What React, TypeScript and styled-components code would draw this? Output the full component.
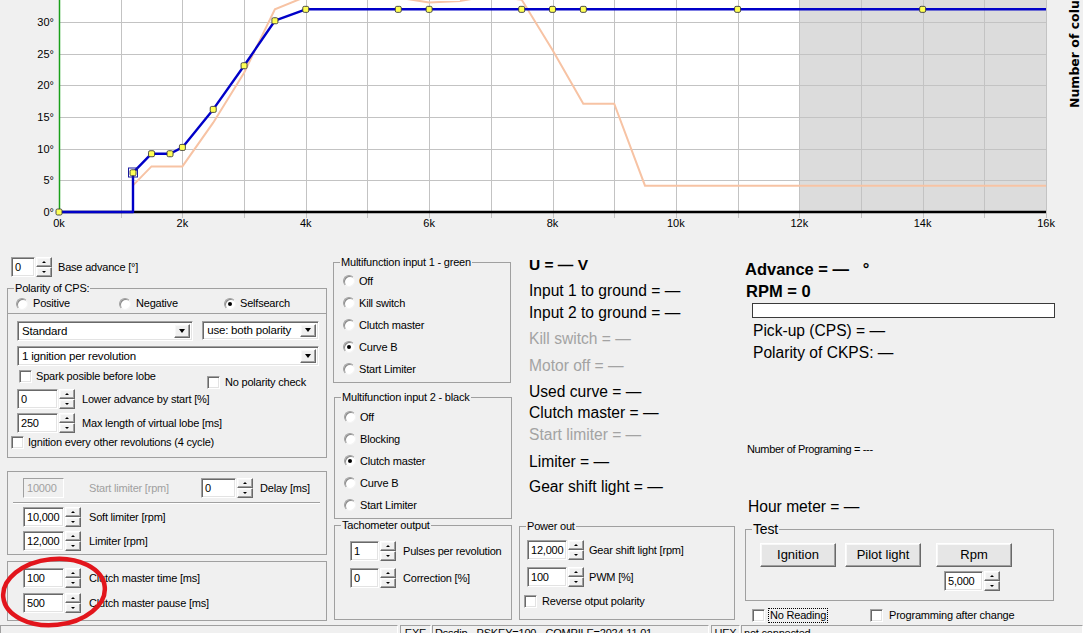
import React from 'react';
import styled, { createGlobalStyle, css } from 'styled-components';

const GlobalStyle = createGlobalStyle`
  html, body {
    margin: 0;
    padding: 0;
    background: #f0f0f0;
    overflow: hidden;
  }
  body {
    font-family: 'Liberation Sans', Arial, sans-serif;
    font-size: 11px;
    line-height: 13px;
    letter-spacing: -0.2px;
    color: #000;
  }
`;

const sunken = css`
  border: 1px solid;
  border-color: #a0a0a0 #ffffff #ffffff #a0a0a0;
  box-shadow: inset 1px 1px 0 #696969, inset -1px -1px 0 #e3e3e3;
`;

const raised = css`
  border: 1px solid;
  border-color: #ffffff #696969 #696969 #ffffff;
  box-shadow: inset -1px -1px 0 #a0a0a0, inset 1px 1px 0 #f8f8f8;
`;

const Window = styled.div`
  position: relative;
  width: 1083px;
  height: 633px;
  overflow: hidden;
  background: #f0f0f0;
`;

/* ---------- chart ---------- */

const ChartSvg = styled.svg`
  display: block;
  font-family: 'Liberation Sans', Arial, sans-serif;
  letter-spacing: 0;
`;

const X0 = 59;
const X1 = 1046;
const Y0 = 212;
const px = (rpm: number) => X0 + (rpm * (X1 - X0)) / 16000;
const py = (deg: number) => Y0 - deg * 6.333;
const crisp = (v: number) => Math.round(v) + 0.5;

const CURVE: [number, number][] = [
  [0, 0], [1200, 0], [1200, 6.2], [1500, 9.2], [1800, 9.2], [2000, 10.2],
  [2500, 16.2], [3000, 23.1], [3500, 30.2], [4000, 32], [5500, 32], [6000, 32],
  [7500, 32], [8000, 32], [8500, 32], [11000, 32], [14000, 32], [16000, 32],
];

const LIMIT: [number, number][] = [
  [1200, 4.2], [1500, 7.2], [2000, 7.2], [2500, 14.1], [3000, 22], [3500, 32],
  [4000, 34], [5000, 34.6], [6000, 33.1], [6500, 33.3], [7000, 34.2], [7500, 33.5],
  [8000, 25.6], [8500, 17.1], [9000, 17.1], [9500, 4.15], [16000, 4.15],
];

const toPoints = (pts: [number, number][]) =>
  pts.map(([r, d]) => `${px(r).toFixed(1)},${py(d).toFixed(1)}`).join(' ');

const Chart = () => {
  const ks = Array.from({ length: 17 }, (_, i) => i);
  const degs = [5, 10, 15, 20, 25, 30, 35];
  const markers = CURVE.filter((_, i) => i !== 1 && i !== CURVE.length - 1);
  return (
    <ChartSvg width={1083} height={232} viewBox="0 0 1083 232">
      <rect x={60} y={0} width={X1 - 60} height={Y0} fill="#ffffff" />
      <rect x={Math.round(px(12000))} y={0} width={X1 - Math.round(px(12000))} height={Y0} fill="#dcdcdc" />
      {degs.map((d) => (
        <line key={d} x1={60} x2={X1} y1={crisp(py(d))} y2={crisp(py(d))} stroke="#c3c3c3" />
      ))}
      {ks.slice(1).map((k) => (
        <line key={k} x1={crisp(px(k * 1000))} x2={crisp(px(k * 1000))} y1={0} y2={218} stroke="#c3c3c3" />
      ))}
      <polyline points={toPoints(LIMIT)} fill="none" stroke="#f7c3a4" strokeWidth={2} />
      <line x1={59.5} x2={59.5} y1={0} y2={Y0} stroke="#19a019" strokeWidth={1.5} />
      <line x1={X0} x2={X1} y1={212} y2={212} stroke="#000" strokeWidth={2.4} />
      <polyline
        points={toPoints(CURVE)}
        fill="none"
        stroke="#0000c8"
        strokeWidth={2.4}
        strokeLinejoin="round"
      />
      <rect x={128.5} y={168} width={9} height={9} fill="none" stroke="#1a1aa0" strokeWidth={1} />
      {markers.map(([r, d], i) => (
        <rect
          key={i}
          x={px(r) - 3}
          y={py(d) - 3}
          width={6}
          height={6}
          rx={1.5}
          fill="#ffff55"
          stroke="#3c3c3c"
          strokeWidth={0.9}
        />
      ))}
      {[0, 5, 10, 15, 20, 25, 30].map((d) => (
        <text key={d} x={54} y={py(d) + 4} fontSize={11} textAnchor="end">
          {d}°
        </text>
      ))}
      {ks.filter((k) => k % 2 === 0).map((k) => (
        <text key={k} x={px(k * 1000)} y={227} fontSize={11} textAnchor="middle">
          {k}k
        </text>
      ))}
      <text
        transform="translate(1079,108) rotate(-90)"
        fontFamily="'DejaVu Sans', Verdana, sans-serif"
        fontWeight={700}
        fontSize={12.5}
      >
        Number of columns
      </text>
    </ChartSvg>
  );
};

/* ---------- dialog controls ---------- */

const Panel = styled.div`
  display: flex;
  align-items: flex-start;
  height: 393px;
`;

const Column = styled.div<{ $w: number; $ml: number }>`
  display: flex;
  flex-direction: column;
  width: ${(p) => p.$w}px;
  margin-left: ${(p) => p.$ml}px;
  flex-shrink: 0;
`;

const Row = styled.div<{ $mt?: number; $ml?: number }>`
  display: flex;
  align-items: center;
  margin-top: ${(p) => p.$mt ?? 0}px;
  margin-left: ${(p) => p.$ml ?? 0}px;
`;

const Edit = styled.div<{ $w: number; $disabled?: boolean }>`
  box-sizing: border-box;
  width: ${(p) => p.$w}px;
  height: 20px;
  padding: 0 3px;
  line-height: 18px;
  white-space: nowrap;
  overflow: hidden;
  background: ${(p) => (p.$disabled ? '#f0f0f0' : '#ffffff')};
  color: ${(p) => (p.$disabled ? '#a0a0a0' : '#000')};
  ${sunken}
  ${(p) => p.$disabled && 'box-shadow: inset -1px -1px 0 #f0f0f0;'}
`;

const Spinner = styled.div`
  display: flex;
  flex-direction: column;
  width: 16px;
  height: 20px;
  margin-left: 1px;
`;

const SpinBtn = styled.span<{ $down?: boolean }>`
  flex: 1;
  box-sizing: border-box;
  display: flex;
  align-items: center;
  justify-content: center;
  background: #f0f0f0;
  ${raised}
  &::after {
    content: '';
    border-left: 2px solid transparent;
    border-right: 2px solid transparent;
    ${(p) => (p.$down ? 'border-top: 2px solid #000;' : 'border-bottom: 2px solid #000;')}
  }
`;

const Label = styled.span<{ $ml?: number; $w?: number; $dim?: boolean }>`
  margin-left: ${(p) => p.$ml ?? 0}px;
  ${(p) => p.$w && `width: ${p.$w}px; flex-shrink: 0;`}
  color: ${(p) => (p.$dim ? '#a0a0a0' : '#000')};
  white-space: nowrap;
`;

type FieldProps = {
  value: string;
  w: number;
  label: string;
  gap: number;
  mt?: number;
  ml?: number;
};

const Field = ({ value, w, label, gap, mt, ml }: FieldProps) => (
  <Row $mt={mt} $ml={ml}>
    <Edit $w={w}>{value}</Edit>
    <Spinner>
      <SpinBtn />
      <SpinBtn $down />
    </Spinner>
    <Label $ml={gap}>{label}</Label>
  </Row>
);

const Combo = styled.div<{ $w: number; $h: number; $mt?: number; $ml?: number }>`
  box-sizing: border-box;
  display: flex;
  width: ${(p) => p.$w}px;
  height: ${(p) => p.$h}px;
  margin-top: ${(p) => p.$mt ?? 0}px;
  margin-left: ${(p) => p.$ml ?? 0}px;
  padding: 2px;
  background: #ffffff;
  ${sunken}
`;

const ComboText = styled.span<{ $h: number }>`
  flex: 1;
  padding-left: 2px;
  line-height: ${(p) => p.$h - 6}px;
  font-size: 11.5px;
  white-space: nowrap;
`;

const DropBtn = styled.span`
  box-sizing: border-box;
  width: 16px;
  display: flex;
  align-items: center;
  justify-content: center;
  background: #f0f0f0;
  ${raised}
  &::after {
    content: '';
    border-left: 3.5px solid transparent;
    border-right: 3.5px solid transparent;
    border-top: 4px solid #000;
  }
`;

const ComboBox = ({ text, w, h, mt, ml }: { text: string; w: number; h: number; mt?: number; ml?: number }) => (
  <Combo $w={w} $h={h} $mt={mt} $ml={ml}>
    <ComboText $h={h}>{text}</ComboText>
    <DropBtn />
  </Combo>
);

const CheckRow = styled.div<{ $mt?: number; $ml?: number; $gap?: number }>`
  display: flex;
  align-items: center;
  gap: ${(p) => p.$gap ?? 4}px;
  height: 13px;
  margin-top: ${(p) => p.$mt ?? 0}px;
  margin-left: ${(p) => p.$ml ?? 0}px;
  white-space: nowrap;
`;

const CheckBox = styled.span`
  box-sizing: border-box;
  width: 13px;
  height: 13px;
  flex-shrink: 0;
  background: #ffffff;
  ${sunken}
`;

const Focus = styled.span`
  outline: 1px dotted #000;
  outline-offset: 0;
  padding: 0 1px;
`;

const Check = ({ label, mt, ml, gap, focus }: { label: string; mt?: number; ml?: number; gap?: number; focus?: boolean }) => (
  <CheckRow $mt={mt} $ml={ml} $gap={gap}>
    <CheckBox />
    {focus ? <Focus>{label}</Focus> : <span>{label}</span>}
  </CheckRow>
);

const Dot = styled.span<{ $on?: boolean }>`
  box-sizing: border-box;
  width: 12px;
  height: 12px;
  flex-shrink: 0;
  border-radius: 50%;
  background: #ffffff;
  border: 1px solid;
  border-color: #a0a0a0 #f4f4f4 #f4f4f4 #a0a0a0;
  box-shadow: inset 1px 1px 0 #8a8a8a;
  display: flex;
  align-items: center;
  justify-content: center;
  &::after {
    content: '';
    display: ${(p) => (p.$on ? 'block' : 'none')};
    width: 4px;
    height: 4px;
    border-radius: 50%;
    background: #000;
  }
`;

const Option = styled.div<{ $h?: number; $gap?: number }>`
  display: flex;
  align-items: center;
  gap: ${(p) => p.$gap ?? 4}px;
  height: ${(p) => p.$h ?? 13}px;
  white-space: nowrap;
`;

const Group = styled.fieldset<{ $mt?: number; $ml?: number; $w?: number; $pad: string }>`
  box-sizing: border-box;
  margin: ${(p) => p.$mt ?? 0}px 0 0 ${(p) => p.$ml ?? 0}px;
  padding: ${(p) => p.$pad};
  ${(p) => p.$w && `width: ${p.$w}px;`}
  min-width: 0;
  border: 1px solid #a0a0a0;
`;

const Caption = styled.legend<{ $ml: number; $size?: number }>`
  padding: 0 1px;
  margin-left: ${(p) => p.$ml}px;
  font-size: ${(p) => p.$size ?? 11}px;
  line-height: ${(p) => (p.$size ?? 11) + 2}px;
`;

const Frame = styled.div<{ $mt: number; $pad: string }>`
  box-sizing: border-box;
  margin-top: ${(p) => p.$mt}px;
  padding: ${(p) => p.$pad};
  border: 1px solid #a0a0a0;
`;

const RadioLine = styled.div`
  display: grid;
  grid-template-columns: 103px 105px auto;
`;

const SplitRow = styled.div<{ $mt: number }>`
  display: grid;
  grid-template-columns: 190px auto;
  align-items: start;
  margin-top: ${(p) => p.$mt}px;
  height: 19px;
`;

const Separator = styled.div`
  height: 0;
  margin: 4px 0 0 -10px;
  border-top: 1px solid #a0a0a0;
  border-bottom: 1px solid #ffffff;
`;

const Readout = styled.div<{ $mt: number; $ml?: number; $dim?: boolean; $bold?: boolean; $size?: number }>`
  margin-top: ${(p) => p.$mt}px;
  margin-left: ${(p) => p.$ml ?? 0}px;
  font-size: ${(p) => p.$size ?? 15.6}px;
  font-weight: ${(p) => (p.$bold ? 700 : 400)};
  line-height: ${(p) => ((p.$size ?? 15.6) > 14 ? 18 : 13)}px;
  letter-spacing: ${(p) => ((p.$size ?? 15.6) > 14 ? '0' : '-0.35px')};
  color: ${(p) => (p.$dim ? '#a3a3a3' : '#000')};
  white-space: nowrap;
`;

const Progress = styled.div`
  box-sizing: border-box;
  width: 303px;
  height: 15px;
  margin: 3px 0 0 7px;
  background: #ffffff;
  border: 1px solid #3a3a3a;
`;

const ButtonRow = styled.div`
  display: flex;
  align-items: flex-start;
`;

const Button = styled.div<{ $ml?: number }>`
  box-sizing: border-box;
  width: 76px;
  height: 24px;
  margin-left: ${(p) => p.$ml ?? 0}px;
  font-size: 13px;
  line-height: 22px;
  letter-spacing: 0;
  text-align: center;
  background: #e6e6e6;
  ${raised}
`;

const RpmStack = styled.div`
  display: flex;
  flex-direction: column;
  margin-left: 15px;
`;

const ChecksLine = styled.div`
  display: grid;
  grid-template-columns: 118px auto;
  margin: 8px 0 0 7px;
`;

const StatusBar = styled.div`
  display: flex;
  height: 20px;
`;

const StatusCell = styled.div<{ $w?: number; $ml?: number; $center?: boolean }>`
  box-sizing: border-box;
  ${(p) => (p.$w ? `width: ${p.$w}px; flex-shrink: 0;` : 'flex: 1;')}
  margin-left: ${(p) => p.$ml ?? 0}px;
  padding: 1px 2px 0;
  border: 1px solid;
  border-color: #a0a0a0 #ffffff #ffffff #a0a0a0;
  text-align: ${(p) => (p.$center ? 'center' : 'left')};
  white-space: nowrap;
  overflow: hidden;
`;

const Annotation = styled.svg`
  position: absolute;
  left: 0;
  top: 553px;
  pointer-events: none;
`;

export default function App() {
  return (
    <>
      <GlobalStyle />
      <Window>
        <Chart />
        <Panel>
          <Column $w={320} $ml={7}>
            <Field value="0" w={24} label="Base advance [°]" gap={6} mt={25} ml={4} />
            <Group $mt={5} $pad="2px 8px 3px 8px">
              <Caption $ml={-2}>Polarity of CPS:</Caption>
              <RadioLine>
                <Option $gap={5}><Dot />Positive</Option>
                <Option $gap={5}><Dot />Negative</Option>
                <Option $gap={4}><Dot $on />Selfsearch</Option>
              </RadioLine>
            </Group>
            <Frame $mt={-1} $pad="5px 7px 8px 9px">
              <Row>
                <ComboBox text="Standard" w={178} h={20} mt={2} />
                <ComboBox text="use: both polarity" w={118} h={19} ml={9} />
              </Row>
              <ComboBox text="1 ignition per revolution" w={302} h={20} mt={5} />
              <SplitRow $mt={4}>
                <Check label="Spark posible before lobe" ml={2} />
                <Check label="No polarity check" mt={6} gap={5} />
              </SplitRow>
              <Field value="0" w={41} label="Lower advance by start [%]" gap={7} />
              <Field value="250" w={41} label="Max length of virtual lobe [ms]" gap={7} mt={4} />
              <Check label="Ignition every other revolutions (4 cycle)" mt={3} ml={-6} />
            </Frame>
            <Frame $mt={13} $pad="6px 6px 3px 15px">
              <Row>
                <Edit $w={41} $disabled>10000</Edit>
                <Label $ml={25} $w={112} $dim>Start limiter [rpm]</Label>
                <Field value="0" w={35} label="Delay [ms]" gap={7} />
              </Row>
              <Separator />
              <Field value="10,000" w={41} label="Soft limiter [rpm]" gap={8} mt={3} />
              <Field value="12,000" w={41} label="Limiter [rpm]" gap={8} mt={4} />
            </Frame>
            <Frame $mt={6} $pad="6px 6px 7px 15px">
              <Field value="100" w={41} label="Clutch master time [ms]" gap={8} />
              <Field value="500" w={41} label="Clutch master pause [ms]" gap={8} mt={5} />
            </Frame>
          </Column>

          <Column $w={179} $ml={6}>
            <Group $mt={24} $w={178} $pad="1px 8px 2px 9px">
              <Caption $ml={-3}>Multifunction input 1 - green</Caption>
              <Option $h={22}><Dot />Off</Option>
              <Option $h={22}><Dot />Kill switch</Option>
              <Option $h={22}><Dot />Clutch master</Option>
              <Option $h={22}><Dot $on />Curve B</Option>
              <Option $h={22}><Dot />Start Limiter</Option>
            </Group>
            <Group $mt={8} $ml={1} $w={178} $pad="2px 8px 2px 9px">
              <Caption $ml={-3}>Multifunction input 2 - black</Caption>
              <Option $h={22}><Dot />Off</Option>
              <Option $h={22}><Dot />Blocking</Option>
              <Option $h={22}><Dot $on />Clutch master</Option>
              <Option $h={22}><Dot />Curve B</Option>
              <Option $h={22}><Dot />Start Limiter</Option>
            </Group>
            <Group $mt={0} $ml={1} $w={178} $pad="9px 6px 31px 15px">
              <Caption $ml={-9}>Tachometer output</Caption>
              <Field value="1" w={29} label="Pulses per revolution" gap={7} />
              <Field value="0" w={29} label="Correction [%]" gap={7} mt={7} />
            </Group>
          </Column>

          <Column $w={217} $ml={6}>
            <Readout $mt={24} $ml={11} $bold $size={15.5}>U = — V</Readout>
            <Readout $mt={8} $ml={11}>Input 1 to ground = —</Readout>
            <Readout $mt={4} $ml={11}>Input 2 to ground = —</Readout>
            <Readout $mt={8} $ml={11} $dim>Kill switch = —</Readout>
            <Readout $mt={9} $ml={11} $dim>Motor off = —</Readout>
            <Readout $mt={8} $ml={11}>Used curve = —</Readout>
            <Readout $mt={3} $ml={11}>Clutch master = —</Readout>
            <Readout $mt={4} $ml={11} $dim>Start limiter = —</Readout>
            <Readout $mt={9} $ml={11}>Limiter = —</Readout>
            <Readout $mt={7} $ml={11}>Gear shift light = —</Readout>
            <Group $mt={24} $ml={1} $w={216} $pad="7px 6px 11px 7px">
              <Caption $ml={-1}>Power out</Caption>
              <Field value="12,000" w={40} label="Gear shift light [rpm]" gap={5} />
              <Field value="100" w={40} label="PWM [%]" gap={5} mt={7} />
              <Check label="Reverse otput polarity" mt={8} ml={-3} gap={5} />
            </Group>
          </Column>

          <Column $w={315} $ml={10}>
            <Readout $mt={28} $bold $size={16.5}>Advance = —&nbsp;&nbsp;&nbsp;°</Readout>
            <Readout $mt={4} $ml={1} $bold $size={16.5}>RPM = 0</Readout>
            <Progress />
            <Readout $mt={4} $ml={8}>Pick-up (CPS) = —</Readout>
            <Readout $mt={4} $ml={8}>Polarity of CKPS: —</Readout>
            <Readout $mt={81} $ml={2} $size={11}>Number of Programing = ---</Readout>
            <Readout $mt={42} $ml={3}>Hour meter = —</Readout>
            <Group $mt={5} $w={309} $pad="6px 6px 9px 14px">
              <Caption $ml={-8} $size={14}>Test</Caption>
              <ButtonRow>
                <Button>Ignition</Button>
                <Button $ml={9}>Pilot light</Button>
                <RpmStack>
                  <Button>Rpm</Button>
                  <Row $mt={4} $ml={8}>
                    <Edit $w={39}>5,000</Edit>
                    <Spinner>
                      <SpinBtn />
                      <SpinBtn $down />
                    </Spinner>
                  </Row>
                </RpmStack>
              </ButtonRow>
            </Group>
            <ChecksLine>
              <Check label="No Reading" gap={4} focus />
              <Check label="Programming after change" gap={6} />
            </ChecksLine>
          </Column>
        </Panel>
        <StatusBar>
          <StatusCell $w={398} />
          <StatusCell $w={31} $ml={2} $center>EXE</StatusCell>
          <StatusCell $w={277} $ml={1}>Dssdip - PSKEY=100 - COMPILE=2024.11.01</StatusCell>
          <StatusCell $w={29} $ml={2} $center>HEX</StatusCell>
          <StatusCell $ml={1}>not connected</StatusCell>
        </StatusBar>
        <Annotation width={112} height={80} viewBox="0 0 112 80">
          <ellipse
            cx={54}
            cy={39}
            rx={51}
            ry={33}
            transform="rotate(-6 54 39)"
            fill="none"
            stroke="#e2151c"
            strokeWidth={4.5}
          />
        </Annotation>
      </Window>
    </>
  );
}
